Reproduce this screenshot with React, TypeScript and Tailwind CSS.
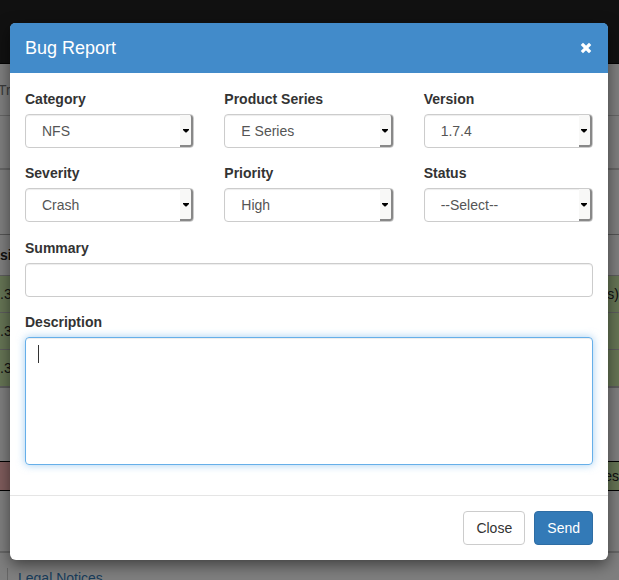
import { useState } from "react";

interface SelectFieldProps {
  id: string;
  label: string;
  options: string[];
}

const selectFields: SelectFieldProps[] = [
  { id: "category", label: "Category", options: ["NFS"] },
  { id: "series", label: "Product Series", options: ["E Series"] },
  { id: "version", label: "Version", options: ["1.7.4"] },
  { id: "severity", label: "Severity", options: ["Crash"] },
  { id: "priority", label: "Priority", options: ["High"] },
  { id: "status", label: "Status", options: ["--Select--"] },
];

// Rows of the page table, first and last cell
const tableRows = [
  { version: ".3", note: "s)" },
  { version: ".3", note: "" },
  { version: ".3", note: "" },
];

const SelectField = ({ id, label, options }: SelectFieldProps) => {
  const [value, setValue] = useState(options[0]);

  return (
    <div>
      <label htmlFor={id} className="mb-[5px] block font-bold">
        {label}
      </label>
      <div className="relative">
        <select
          id={id}
          value={value}
          onChange={(e) => setValue(e.target.value)}
          className="block h-[34px] w-full appearance-none rounded border border-[#ccc] bg-white px-4 text-[#555] shadow-[inset_0_1px_1px_rgba(0,0,0,0.075)]"
        >
          {options.map((option) => (
            <option key={option} value={option}>
              {option}
            </option>
          ))}
        </select>
        <span className="pointer-events-none absolute top-px right-px bottom-px flex w-[13px] items-center justify-center rounded-r-[3px] border-r-2 border-b-2 border-[#888] bg-[#f8f8f7] pt-0.5">
          <svg width="6" height="4" viewBox="0 0 6 4" aria-hidden="true">
            <path d="M0 0h6v1L3.5 3.5h-1L0 1z" fill="#000" />
          </svg>
        </span>
      </div>
    </div>
  );
};

// Page that lies under the dialog
const TrackerPage = () => (
  <div className="text-[#222]">
    <header className="h-16 border-b border-[#080808] bg-[#222]" />
    <nav className="-ml-0.5 flex h-13 items-center border-b border-[#ccc] text-[#777]">
      Tr
    </nav>
    <div className="h-[54px] border-b-2 border-[#ccc]" />
    <div className="h-[65px] border-b border-[#aaa]" />
    <table className="w-full">
      <thead>
        <tr className="h-10">
          <th className="text-left font-bold">si</th>
          <th />
        </tr>
      </thead>
      <tbody>
        {tableRows.map((row, index) => (
          <tr key={index} className="h-[37px] border-t border-[#bbb] bg-[#cdeaab]">
            <td>{row.version}</td>
            <td className="text-right">{row.note}</td>
          </tr>
        ))}
      </tbody>
    </table>
    <div className="h-[75px] border-t-2 border-[#bbb]" />
    <div className="flex h-[30px] items-center border-y border-black">
      <div className="h-full w-1/2 bg-[#ffb8b8]" />
      <div className="flex h-full w-1/2 items-center justify-end bg-[#cdeaab]">
        es
      </div>
    </div>
    <footer className="mt-[60px] border-t-2 border-[#ccc] pt-[15px]">
      <a
        href="#legal"
        className="ml-[7px] block border-l border-[#ccc] pl-[10px] text-[#337ab7]"
      >
        Legal Notices
      </a>
    </footer>
  </div>
);

const BugReportDialog = () => {
  const [summary, setSummary] = useState("");
  const [description, setDescription] = useState("");

  return (
    <div
      role="dialog"
      aria-labelledby="dialog-title"
      className="mt-[23px] mr-[11px] ml-[10px] rounded-md bg-white shadow-[0_5px_15px_rgba(0,0,0,0.5)]"
    >
      <div className="flex h-[50px] items-center justify-between rounded-t-[5px] bg-[#428bca] px-[15px] text-white">
        <h4 id="dialog-title" className="text-lg">
          Bug Report
        </h4>
        <button type="button" aria-label="Close dialog" className="px-px">
          <svg width="12" height="12" viewBox="0 0 12 12" aria-hidden="true">
            <path
              d="M3 3l6 6M9 3l-6 6"
              stroke="currentColor"
              strokeWidth="3.2"
              strokeLinecap="square"
            />
          </svg>
        </button>
      </div>

      <form>
        <div className="flex flex-col gap-4 px-[15px] pt-4 pb-[30px]">
          <div className="grid grid-cols-3 gap-x-[30px] gap-y-[15px]">
            {selectFields.map((field) => (
              <SelectField key={field.id} {...field} />
            ))}
          </div>
          <div className="flex flex-col gap-[15px]">
            <div>
              <label htmlFor="summary" className="mb-[5px] block font-bold">
                Summary
              </label>
              <input
                id="summary"
                type="text"
                value={summary}
                onChange={(e) => setSummary(e.target.value)}
                className="block h-[34px] w-full rounded border border-[#ccc] px-3 text-[#555] shadow-[inset_0_1px_1px_rgba(0,0,0,0.075)]"
              />
            </div>
            <div>
              <label htmlFor="description" className="mb-[5px] block font-bold">
                Description
              </label>
              <div className="relative">
                <textarea
                  id="description"
                  value={description}
                  onChange={(e) => setDescription(e.target.value)}
                  className="block h-32 w-full resize-none rounded border border-[#66afe9] px-3 py-1.5 text-[#555] caret-transparent shadow-[inset_0_1px_1px_rgba(0,0,0,0.075),0_0_8px_rgba(102,175,233,0.6)] outline-none"
                />
                {/* Text cursor */}
                {description === "" && (
                  <span className="pointer-events-none absolute top-2 left-[13px] h-[18px] w-px bg-[#333]" />
                )}
              </div>
            </div>
          </div>
        </div>

        <div className="flex justify-end gap-[9px] border-t border-[#e5e5e5] p-[15px]">
          <button
            type="button"
            className="h-[34px] min-w-[62px] rounded border border-[#ccc] bg-white px-3 text-[#333]"
          >
            Close
          </button>
          <button
            type="button"
            className="h-[34px] rounded border border-[#2e6da4] bg-[#337ab7] px-3 text-white"
          >
            Send
          </button>
        </div>
      </form>
    </div>
  );
};

const App = () => {
  return (
    <div className="relative h-screen overflow-hidden bg-white font-['Liberation_Sans',Arial,sans-serif] text-sm/5 text-[#333]">
      <TrackerPage />
      {/* Backdrop */}
      <div className="absolute inset-0 overflow-hidden bg-black/50">
        <BugReportDialog />
      </div>
    </div>
  );
};

export default App;
